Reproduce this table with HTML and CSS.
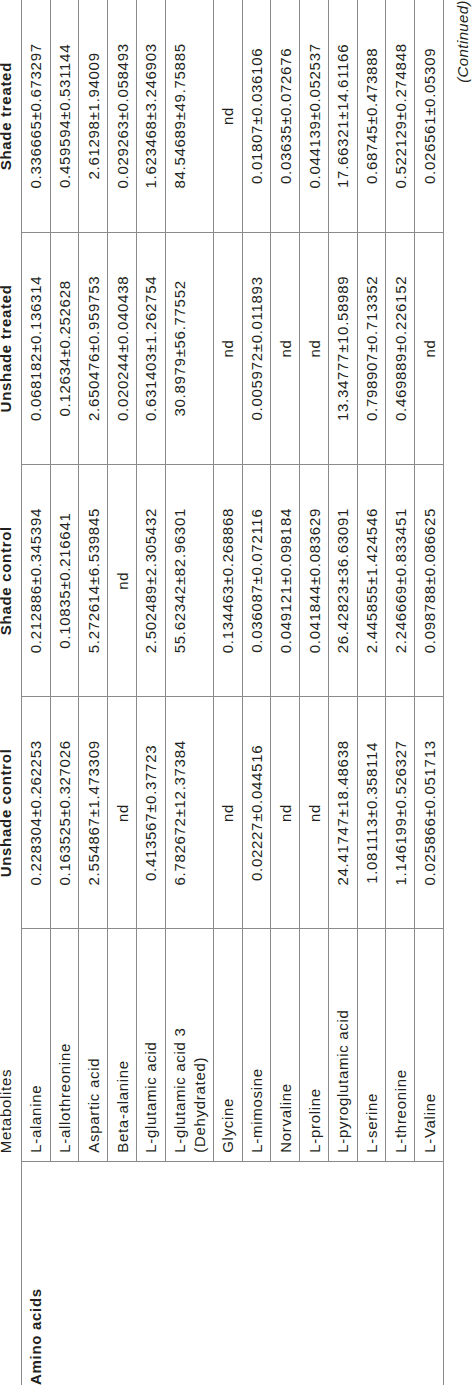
FILE: index.html
```html
<!DOCTYPE html>
<html lang="en">
<head>
<meta charset="utf-8">
<title>Amino acids table</title>
<link rel="stylesheet" href="styles.css">
</head>
<body>
<div class="page">
  <table class="data">
    <thead>
      <tr>
        <th class="cat"></th>
        <th class="name">Metabolites</th>
        <th>Unshade control</th>
        <th>Shade control</th>
        <th>Unshade treated</th>
        <th>Shade treated</th>
      </tr>
    </thead>
    <tbody>
      <tr><td class="cat" rowspan="14">Amino acids</td><td class="name">L-alanine</td><td>0.228304±0.262253</td><td>0.212886±0.345394</td><td>0.068182±0.136314</td><td>0.336665±0.673297</td></tr>
      <tr><td class="name">L-allothreonine</td><td>0.163525±0.327026</td><td>0.10835±0.216641</td><td>0.12634±0.252628</td><td>0.459594±0.531144</td></tr>
      <tr><td class="name">Aspartic acid</td><td>2.554867±1.473309</td><td>5.272614±6.539845</td><td>2.650476±0.959753</td><td>2.61298±1.94009</td></tr>
      <tr><td class="name">Beta-alanine</td><td>nd</td><td>nd</td><td>0.020244±0.040438</td><td>0.029263±0.058493</td></tr>
      <tr><td class="name">L-glutamic acid</td><td>0.413567±0.37723</td><td>2.502489±2.305432</td><td>0.631403±1.262754</td><td>1.623468±3.246903</td></tr>
      <tr><td class="name">L-glutamic acid 3<br>(Dehydrated)</td><td>6.782672±12.37384</td><td>55.62342±82.96301</td><td>30.8979±56.77552</td><td>84.54689±49.75885</td></tr>
      <tr><td class="name">Glycine</td><td>nd</td><td>0.134463±0.268868</td><td>nd</td><td>nd</td></tr>
      <tr><td class="name">L-mimosine</td><td>0.02227±0.044516</td><td>0.036087±0.072116</td><td>0.005972±0.011893</td><td>0.01807±0.036106</td></tr>
      <tr><td class="name">Norvaline</td><td>nd</td><td>0.049121±0.098184</td><td>nd</td><td>0.03635±0.072676</td></tr>
      <tr><td class="name">L-proline</td><td>nd</td><td>0.041844±0.083629</td><td>nd</td><td>0.044139±0.052537</td></tr>
      <tr><td class="name">L-pyroglutamic acid</td><td>24.41747±18.48638</td><td>26.42823±36.63091</td><td>13.34777±10.58989</td><td>17.66321±14.61166</td></tr>
      <tr><td class="name">L-serine</td><td>1.081113±0.358114</td><td>2.445855±1.424546</td><td>0.798907±0.713352</td><td>0.68745±0.473888</td></tr>
      <tr><td class="name">L-threonine</td><td>1.146199±0.526327</td><td>2.246669±0.833451</td><td>0.469889±0.226152</td><td>0.522129±0.274848</td></tr>
      <tr><td class="name">L-Valine</td><td>0.025866±0.051713</td><td>0.098788±0.086625</td><td>nd</td><td>0.026561±0.05309</td></tr>
    </tbody>
  </table>
  <div class="cont">(Continued)</div>
</div>
</body>
</html>
```

FILE: styles.css
```css
html, body {
  margin: 0;
  padding: 0;
  overflow: hidden;
  background: #ffffff;
}

body {
  width: 474px;
  height: 1385px;
}

.page {
  width: 1394px;
  transform-origin: 0 0;
  transform: translate(-7px, 1394px) rotate(-90deg);
  font-family: "Liberation Sans", Arial, sans-serif;
  font-size: 15px;
  color: #231f20;
  letter-spacing: 0.7px;
}

.data {
  width: 1394px;
  border-collapse: collapse;
  table-layout: fixed;
}

.data th,
.data td {
  line-height: 19.5px;
  vertical-align: top;
  text-align: center;
}

.data td {
  padding: 4.5px 8px 3.75px;
  border: 1px solid #8a8a8a;
  font-weight: normal;
}

.data td:last-child {
  border-right: none;
}

.data th {
  padding: 2.5px 8px 5.75px;
  border-bottom: 1px solid #8a8a8a;
  font-weight: bold;
}

.data th.name {
  font-weight: normal;
}

.data .name,
.data .cat {
  text-align: left;
}

.data td.cat {
  font-weight: bold;
}

.cont {
  margin-top: 9.5px;
  line-height: 19.5px;
  text-align: right;
  font-style: italic;
  letter-spacing: 0.4px;
}
```
